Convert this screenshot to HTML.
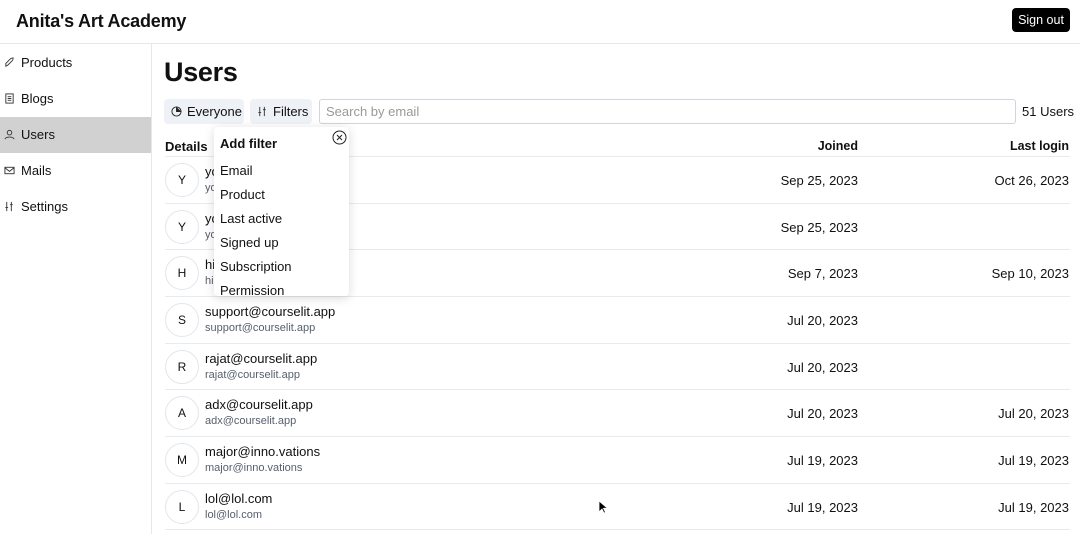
<!DOCTYPE html>
<html><head><style>
*{box-sizing:border-box;margin:0;padding:0}
body{width:1080px;height:534px;overflow:hidden;background:#fff;font-family:"Liberation Sans",sans-serif;color:#111;position:relative}
.hdr{position:absolute;left:0;top:0;width:1080px;height:44px;border-bottom:1px solid #e5e7eb}
.hdr h1{position:absolute;left:16px;top:11px;font-size:18px;font-weight:bold;letter-spacing:-0.2px}
.so{position:absolute;left:1012px;top:8px;width:58px;height:24px;background:#000;color:#fff;border-radius:4px;font-size:12.5px;text-align:center;line-height:24px}
.side{position:absolute;left:0;top:44px;width:152px;height:490px;border-right:1px solid #e5e7eb}
.nav{position:absolute;left:0;width:151px;height:36px;font-size:13px;line-height:36px;padding-left:21px}
.nav svg{position:absolute;left:4px;top:12px}
.nav.act{background:#d1d1d1}
.t{position:absolute;white-space:nowrap}
.btn{position:absolute;top:99px;height:25px;background:#eef2f6;border-radius:4px;font-size:13px;line-height:25px}
.row{position:absolute;left:165px;width:905px;height:47px;border-top:1px solid #e5ebf1}
.av{position:absolute;left:0;top:6px;width:34px;height:34px;border:1px solid #e2e6ea;border-radius:50%;text-align:center;line-height:32px;font-size:12px}
.nm{position:absolute;left:40px;top:7px;font-size:13px}
.em{position:absolute;left:40px;top:25px;font-size:11px;color:#555f6d}
.d1{position:absolute;right:212px;top:16px;font-size:13px}
.d2{position:absolute;right:1px;top:16px;font-size:13px}
.pop{position:absolute;left:214px;top:127px;width:135px;height:169px;background:#fff;border-radius:4px;box-shadow:0 2px 10px rgba(0,0,0,.15);overflow:hidden;font-size:13px}
.pop div{position:absolute;left:6px}
</style></head><body>
<div class="hdr"><h1>Anita's Art Academy</h1><div class="so">Sign out</div></div>
<div class="side">
<div class="nav" style="top:1px"><svg width="11" height="11" viewBox="0 0 12 12" fill="none" stroke="#333" stroke-width="1"><path d="M2 10l2-1 5-5c1-1 1-3 1-3s-2 0-3 1L2 7z"/></svg>Products</div>
<div class="nav" style="top:37px"><svg width="11" height="11" viewBox="0 0 12 12" fill="none" stroke="#333"><rect x="2" y="1" width="8" height="10"/><path d="M4 4h4M4 6h4M4 8h4"/></svg>Blogs</div>
<div class="nav act" style="top:73px"><svg width="11" height="11" viewBox="0 0 12 12" fill="none" stroke="#333"><circle cx="6" cy="4" r="2.5"/><path d="M1 11c1-3 9-3 10 0"/></svg>Users</div>
<div class="nav" style="top:109px"><svg width="11" height="11" viewBox="0 0 12 12" fill="none" stroke="#333"><rect x="1" y="2.5" width="10" height="7"/><path d="M1 3l5 4 5-4"/></svg>Mails</div>
<div class="nav" style="top:145px"><svg width="11" height="11" viewBox="0 0 12 12" fill="none" stroke="#333"><path d="M3 1v10M8 1v10"/><path d="M1.5 7h3M6.5 4h3"/></svg>Settings</div>
</div>
<div class="t" style="left:164px;top:57px;font-size:27px;font-weight:bold;letter-spacing:-0.3px">Users</div>
<div class="btn" style="left:164px;width:80px;padding-left:23px"><svg style="position:absolute;left:7px;top:7px" width="11" height="11" viewBox="0 0 12 12" fill="none" stroke="#222"><circle cx="6" cy="6" r="5"/><path d="M6 1v5h5" fill="#222"/></svg>Everyone</div>
<div class="btn" style="left:250px;width:62px;padding-left:23px"><svg style="position:absolute;left:7px;top:7px" width="11" height="11" viewBox="0 0 12 12" fill="none" stroke="#333"><path d="M3 1v10M8 1v10"/><path d="M1.5 7h3M6.5 4h3"/></svg>Filters</div>
<div style="position:absolute;left:319px;top:99px;width:697px;height:25px;border:1px solid #cfd5dc;border-radius:3px;font-size:13px;color:#999;line-height:23px;padding-left:6px">Search by email</div>
<div class="t" style="left:1022px;top:104px;font-size:13px">51 Users</div>
<div class="t" style="left:165px;top:139px;font-size:13px;font-weight:bold">Details</div>
<div class="t" style="right:222px;top:139px;font-size:12.5px;font-weight:bold">Joined</div>
<div class="t" style="right:11px;top:139px;font-size:12.5px;font-weight:bold">Last login</div>
<div class="row" style="top:156px"><div class="av">Y</div><div class="nm">yo</div><div class="em">yo</div><div class="d1">Sep 25, 2023</div><div class="d2">Oct 26, 2023</div></div>
<div class="row" style="top:203px"><div class="av">Y</div><div class="nm">yo</div><div class="em">yo</div><div class="d1">Sep 25, 2023</div></div>
<div class="row" style="top:249px"><div class="av">H</div><div class="nm">hi</div><div class="em">hi</div><div class="d1">Sep 7, 2023</div><div class="d2">Sep 10, 2023</div></div>
<div class="row" style="top:296px"><div class="av">S</div><div class="nm">support@courselit.app</div><div class="em">support@courselit.app</div><div class="d1">Jul 20, 2023</div></div>
<div class="row" style="top:343px"><div class="av">R</div><div class="nm">rajat@courselit.app</div><div class="em">rajat@courselit.app</div><div class="d1">Jul 20, 2023</div></div>
<div class="row" style="top:389px"><div class="av">A</div><div class="nm">adx@courselit.app</div><div class="em">adx@courselit.app</div><div class="d1">Jul 20, 2023</div><div class="d2">Jul 20, 2023</div></div>
<div class="row" style="top:436px"><div class="av">M</div><div class="nm">major@inno.vations</div><div class="em">major@inno.vations</div><div class="d1">Jul 19, 2023</div><div class="d2">Jul 19, 2023</div></div>
<div class="row" style="top:483px"><div class="av">L</div><div class="nm">lol@lol.com</div><div class="em">lol@lol.com</div><div class="d1">Jul 19, 2023</div><div class="d2">Jul 19, 2023</div></div>
<div style="position:absolute;left:165px;top:529px;width:905px;border-top:1px solid #e5ebf1"></div>
<div class="pop">
<div style="top:9px;font-weight:bold">Add filter</div>
<svg style="position:absolute;left:118px;top:3px" width="15" height="15" viewBox="0 0 15 15" fill="none" stroke="#222"><circle cx="7.5" cy="7.5" r="6.5"/><path d="M5 5l5 5M10 5l-5 5"/></svg>
<div style="top:36px">Email</div>
<div style="top:60px">Product</div>
<div style="top:84px">Last active</div>
<div style="top:108px">Signed up</div>
<div style="top:132px">Subscription</div>
<div style="top:156px">Permission</div>
</div>
<svg style="position:absolute;left:598px;top:500px" width="9" height="14" viewBox="0 0 9 14"><path d="M1 1v11l3-3 2 4 1.5-.7-2-4h4z" fill="#000" stroke="#fff" stroke-width=".8"/></svg>
</body></html>
